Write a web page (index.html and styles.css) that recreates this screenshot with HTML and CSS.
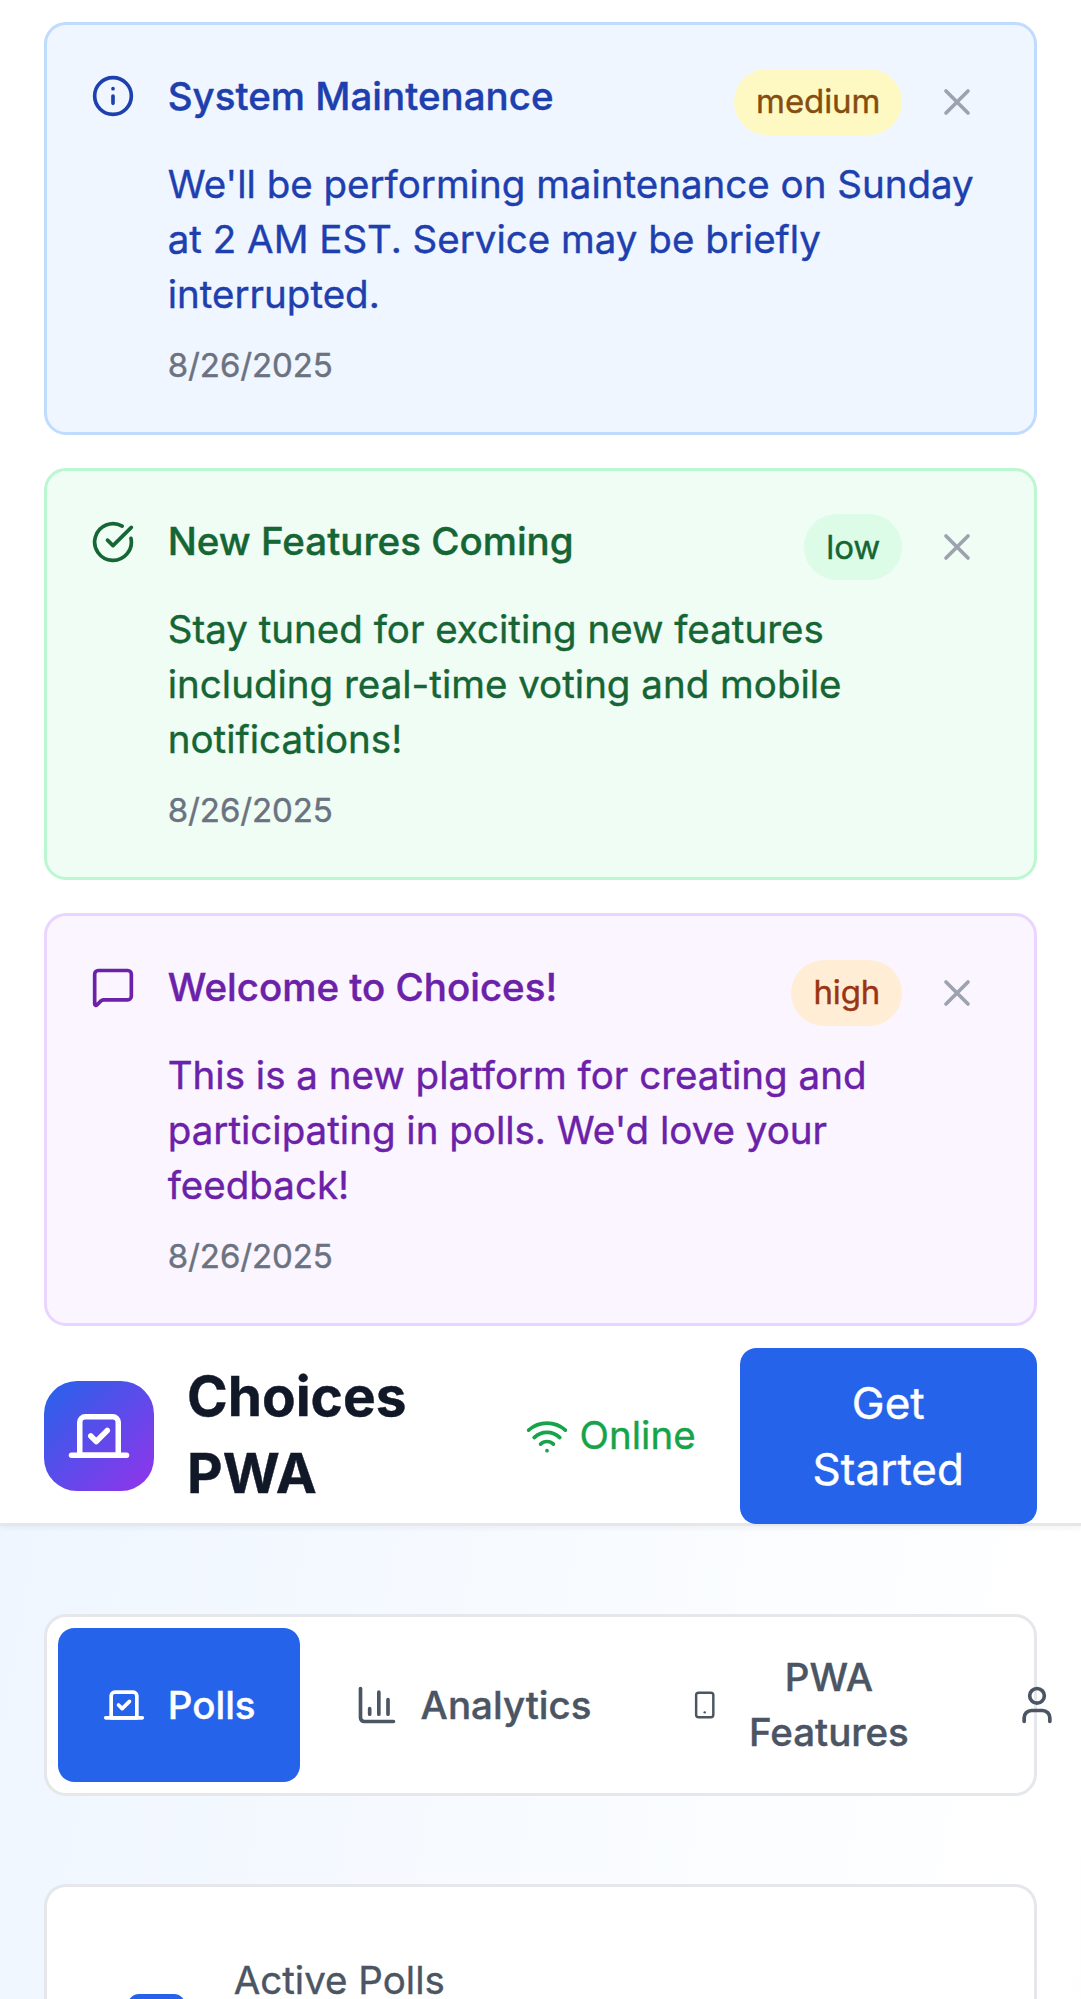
FILE: index.html
```html
<!DOCTYPE html>
<html lang="en">
<head>
<meta charset="utf-8">
<title>Choices PWA</title>
<link rel="stylesheet" href="styles.css">
</head>
<body>
<section class="notices">
  <article class="notice notice-info">
    <svg class="icon notice-icon" viewBox="0 0 24 24"><circle cx="12" cy="12" r="10"/><path d="M12 16v-4M12 8h.01"/></svg>
    <div class="notice-content">
      <div class="notice-head">
        <h4 class="notice-title">System Maintenance</h4>
        <div class="notice-actions">
          <span class="badge badge-medium">medium</span>
          <button class="close"><svg class="icon" viewBox="0 0 24 24"><path d="M18 6 6 18M6 6l12 12"/></svg></button>
        </div>
      </div>
      <p class="notice-text">We'll be performing maintenance on Sunday at 2 AM EST. Service may be briefly interrupted.</p>
      <p class="notice-date">8/26/2025</p>
    </div>
  </article>
  <article class="notice notice-success">
    <svg class="icon notice-icon" viewBox="0 0 24 24"><path d="M21.801 10A10 10 0 1 1 17 3.335"/><path d="m9 11 3 3L22 4"/></svg>
    <div class="notice-content">
      <div class="notice-head">
        <h4 class="notice-title">New Features Coming</h4>
        <div class="notice-actions">
          <span class="badge badge-low">low</span>
          <button class="close"><svg class="icon" viewBox="0 0 24 24"><path d="M18 6 6 18M6 6l12 12"/></svg></button>
        </div>
      </div>
      <p class="notice-text">Stay tuned for exciting new features including real-time voting and mobile notifications!</p>
      <p class="notice-date">8/26/2025</p>
    </div>
  </article>
  <article class="notice notice-feedback">
    <svg class="icon notice-icon" viewBox="0 0 24 24"><path d="M22 17a2 2 0 0 1-2 2H6.828a2 2 0 0 0-1.414.586l-2.202 2.202A.71.71 0 0 1 2 21.286V5a2 2 0 0 1 2-2h16a2 2 0 0 1 2 2z"/></svg>
    <div class="notice-content">
      <div class="notice-head">
        <h4 class="notice-title">Welcome to Choices!</h4>
        <div class="notice-actions">
          <span class="badge badge-high">high</span>
          <button class="close"><svg class="icon" viewBox="0 0 24 24"><path d="M18 6 6 18M6 6l12 12"/></svg></button>
        </div>
      </div>
      <p class="notice-text">This is a new platform for creating and participating in polls. We'd love your feedback!</p>
      <p class="notice-date">8/26/2025</p>
    </div>
  </article>
</section>

<header class="header">
  <div class="brand">
    <div class="logo"><svg class="icon" viewBox="0 0 24 24"><path d="m9 12 2 2 4-4"/><path d="M5 7c0-1.1.9-2 2-2h10a2 2 0 0 1 2 2v12H5V7Z"/><path d="M22 19H2"/></svg></div>
    <h1 class="brand-name">Choices PWA</h1>
  </div>
  <div class="header-actions">
    <div class="status">
      <svg class="icon" viewBox="0 0 24 24"><path d="M12 20h.01M2 8.82a15 15 0 0 1 20 0M5 12.859a10 10 0 0 1 14 0M8.5 16.429a5 5 0 0 1 7 0"/></svg>
      <span>Online</span>
    </div>
    <button class="cta">Get Started</button>
  </div>
</header>

<main class="main">
  <nav class="tabs">
    <button class="tab tab-active">
      <svg class="icon" viewBox="0 0 24 24"><path d="m9 12 2 2 4-4"/><path d="M5 7c0-1.1.9-2 2-2h10a2 2 0 0 1 2 2v12H5V7Z"/><path d="M22 19H2"/></svg>
      <span>Polls</span>
    </button>
    <button class="tab">
      <svg class="icon" viewBox="0 0 24 24"><path d="M3 3v16a2 2 0 0 0 2 2h16M18 17V9M13 17V5M8 17v-3"/></svg>
      <span>Analytics</span>
    </button>
    <button class="tab tab-features">
      <svg class="icon" viewBox="0 0 24 24"><rect x="5" y="2" width="14" height="20" rx="2"/><path d="M12 18h.01"/></svg>
      <span>PWA Features</span>
    </button>
    <button class="tab">
      <svg class="icon" viewBox="0 0 24 24"><path d="M19 21v-2a4 4 0 0 0-4-4H9a4 4 0 0 0-4 4v2"/><circle cx="12" cy="7" r="4"/></svg>
    </button>
  </nav>
  <section class="stat">
    <div class="stat-icon"></div>
    <p class="stat-label">Active Polls</p>
  </section>
</main>
</body>
</html>
```
FILE: styles.css
```css
/* 1rem = 16 layout units at a 2.75 scale */
html { font-size: 44px; background: #fff; }

*, *::before { box-sizing: border-box; margin: 0; padding: 0; }

body {
  height: 1999px;
  overflow: hidden;
  font-family: Inter, "Liberation Sans", sans-serif;
  line-height: 1.5;
  color: #111827;
  -webkit-text-stroke: 0.4px currentColor;
}

button { font: inherit; color: inherit; border: 0; background: none; }

.icon {
  display: block;
  width: 1rem;
  height: 1rem;
  flex-shrink: 0;
  fill: none;
  stroke: currentColor;
  stroke-width: 2;
  stroke-linecap: round;
  stroke-linejoin: round;
}

/* Notices */
.notices {
  display: flex;
  flex-direction: column;
  gap: 0.75rem;
  padding: 0.5rem 1rem;
}

.notice {
  display: flex;
  align-items: flex-start;
  gap: 0.75rem;
  height: 9.375rem;
  padding: calc(1.0625rem - 3px);
  border: 3px solid;
  border-radius: 0.5rem;
}

.notice-info { background: #eff6ff; border-color: #bfdbfe; color: #1e40af; }
.notice-success { background: #f0fdf4; border-color: #bbf7d0; color: #166534; }
.notice-feedback { background: #faf5ff; border-color: #e9d5ff; color: #6b21a8; }

.notice-icon { margin-top: 0.125rem; }
.notice-content { flex: 1; }

.notice-head {
  display: flex;
  justify-content: space-between;
  align-items: flex-start;
  margin-bottom: 0.5rem;
}

.notice-title, .notice-text {
  font-size: 0.875rem;
  line-height: 1.25rem;
}
.notice-title { font-weight: 500; }

.notice-actions { display: flex; align-items: center; gap: 0.5rem; }

.badge {
  padding: 0.235rem 0.5rem 0.265rem;
  border-radius: 99px;
  font-size: 0.75rem;
  line-height: 1rem;
  letter-spacing: -0.1px;
}
.badge-medium { background: #fef9c3; color: #854d0e; }
.badge-low { background: #dcfce7; color: #166534; }
.badge-high { background: #ffedd5; color: #9a3412; }

.close { padding: 0.25rem; color: #9ca3af; }

.notice-date {
  margin-top: 0.48rem;
  font-size: 0.75rem;
  line-height: 1rem;
  letter-spacing: -0.1px;
  color: #6b7280;
}

/* Header */
.header {
  position: relative;
  z-index: 1;
  display: flex;
  justify-content: space-between;
  align-items: center;
  height: 4.0625rem;
  padding: 0.5px 1rem 0;
  background: #fff;
  border-bottom: 3px solid #e5e7eb;
  box-shadow: 0 2.75px 5.5px rgba(0, 0, 0, 0.05);
}

.brand { display: flex; align-items: center; gap: 0.75rem; }

.logo {
  display: grid;
  place-items: center;
  width: 2.5rem;
  height: 2.5rem;
  border-radius: 0.75rem;
  background: linear-gradient(to bottom right, #2563eb, #9333ea);
  color: #fff;
}
.logo .icon { width: 1.5rem; height: 1.5rem; }

.brand-name {
  width: 6rem;
  padding-bottom: 1px;
  font-size: 1.25rem;
  line-height: 1.75rem;
  font-weight: 700;
}

.header-actions { display: flex; align-items: center; gap: 1.02rem; }

.status {
  display: flex;
  align-items: center;
  gap: 0.23rem;
  font-size: 0.875rem;
  line-height: 1.25rem;
  color: #16a34a;
}

.cta {
  width: 6.74rem;
  height: 4rem;
  padding: 0.5rem 1.01rem 0.5rem 0.99rem;
  border-radius: 0.375rem;
  background: #2563eb;
  color: #fff;
}

/* Main */
.main {
  display: flex;
  flex-direction: column;
  gap: 2rem;
  padding: 2rem 1rem 0;
  background: linear-gradient(to bottom right, #eff6ff, #fff 50%, #faf5ff) 0 0 / 100% 6200px no-repeat;
}

.tabs {
  display: flex;
  gap: 0.25rem;
  height: 4.125rem;
  padding: calc(0.3125rem - 3px);
  border: 3px solid #e5e7eb;
  border-radius: 0.5rem;
  background: #fff;
}

.tab {
  display: flex;
  flex-shrink: 0;
  align-items: center;
  gap: 0.5rem;
  padding: 0.5rem 1rem;
  border-radius: 0.375rem;
  font-size: 0.875rem;
  line-height: 1.25rem;
  font-weight: 500;
  color: #4b5563;
}
.tab-active { background: #2563eb; color: #fff; }
.tab-features { width: 7.125rem; }
.tab-features .icon { width: 0.67rem; }
.tab-features span { flex: 1; }

/* The card continues below the fold */
.stat {
  display: flex;
  align-items: flex-start;
  gap: 1rem;
  height: 115px;
  padding: calc(1.5625rem - 3px) calc(1.5625rem - 3px) 0;
  border: 3px solid #e5e7eb;
  border-bottom: 0;
  border-radius: 0.5rem 0.5rem 0 0;
  background: #fff;
}

.stat-icon {
  width: 1.3rem;
  height: 1.3rem;
  margin: 0.95rem 0.1rem 0 0.35rem;
  border-radius: 0.25rem;
  background: #2563eb;
}

.stat-label {
  font-size: 0.875rem;
  line-height: 1.25rem;
  color: #4b5563;
}
```
